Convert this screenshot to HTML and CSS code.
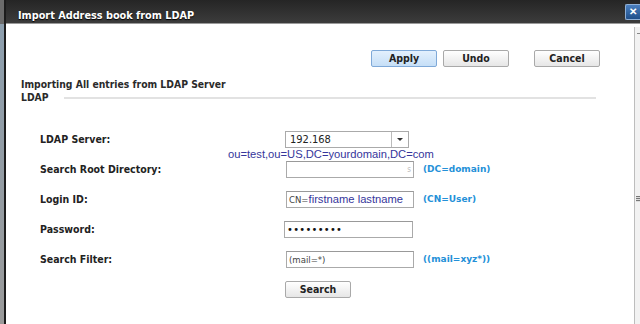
FILE: index.html
```html
<!DOCTYPE html>
<html lang="en">
<head>
    <meta charset="UTF-8">
    <meta name="viewport" content="width=device-width, initial-scale=1.0">
    <title>Import Address book from LDAP</title>
    <link rel="stylesheet" href="styles.css">
</head>
<body>
    <div class="screen">
        <div class="desktop-edge"></div>
        <div class="dialog">
            <div class="titlebar">
                <span class="title">Import Address book from LDAP</span>
                <button class="close-btn">&#x2715;</button>
            </div>
            <div class="dialog-body">
                <div class="content">
                    <div class="toolbar">
                        <button class="btn btn-primary">Apply</button>
                        <button class="btn btn-undo">Undo</button>
                        <button class="btn">Cancel</button>
                    </div>

                    <div class="section-head">
                        <p>Importing All entries from LDAP Server</p>
                        <div class="legend">
                            <span>LDAP</span>
                            <div class="rule"></div>
                        </div>
                    </div>

                    <div class="form">
                        <label>LDAP Server:</label>
                        <div class="cell">
                            <div class="select">
                                <span class="select-value">192.168</span>
                                <span class="select-arrow"></span>
                            </div>
                            <span class="annotation">ou=test,ou=US,DC=yourdomain,DC=com</span>
                        </div>
                        <span></span>

                        <label>Search Root Directory:</label>
                        <div class="cell">
                            <div class="field"><span class="cut">s</span></div>
                        </div>
                        <span class="hint">(DC=domain)</span>

                        <label>Login ID:</label>
                        <div class="cell">
                            <div class="field"><span class="prefix">CN=</span><span class="typed">firstname lastname</span></div>
                        </div>
                        <span class="hint">(CN=User)</span>

                        <label>Password:</label>
                        <div class="cell">
                            <input class="field password" type="password" value="secretpwd">
                        </div>
                        <span></span>

                        <label>Search Filter:</label>
                        <div class="cell">
                            <input class="field" type="text" value="(mail=*)">
                        </div>
                        <span class="hint">((mail=xyz*))</span>

                        <span></span>
                        <div class="cell">
                            <button class="btn btn-search">Search</button>
                        </div>
                        <span></span>
                    </div>
                </div>
                <div class="scrollbar">
                    <span class="scroll-tick"></span>
                    <span class="grip"></span>
                </div>
            </div>
        </div>
    </div>
</body>
</html>
```

FILE: styles.css
```css
body {
    margin: 0;
    padding: 0;
    background: #ffffff;
    font-family: "DejaVu Sans Condensed", "DejaVu Sans", sans-serif;
    color: #222;
}

.screen {
    display: flex;
    height: 324px;
    overflow: hidden;
}

.desktop-edge {
    width: 4px;
    background: linear-gradient(#6b6b6b 0, #6b6b6b 24px, #8d9fae 24px, #9a9a9a 100%);
}

.dialog {
    flex: 1;
    display: flex;
    flex-direction: column;
    border-left: 2px solid #1c1c1c;
}

/* Title bar */
.titlebar {
    height: 23px;
    display: flex;
    justify-content: space-between;
    align-items: flex-start;
    background: linear-gradient(#252525, #3c3c3c);
    border-bottom: 1px solid #9a9a9a;
}

.title {
    padding: 9px 0 0 12px;
    line-height: 14px;
    font-size: 10.8px;
    font-weight: bold;
    color: #fff;
    text-shadow: 0 1px 1px #000;
}

.close-btn {
    width: 15px;
    height: 16px;
    margin-top: 4px;
    padding: 0;
    border: 1px solid #8fb0d6;
    border-right: none;
    border-radius: 2px 0 0 2px;
    background: linear-gradient(#4a7fbf, #1f4f8a);
    color: #fff;
    font-size: 10px;
    font-weight: bold;
    line-height: 14px;
}

.dialog-body {
    flex: 1;
    display: flex;
}

.content {
    flex: 1;
}

.scrollbar {
    width: 5px;
    margin-top: 3px;
    border-left: 1px solid #bdbdbd;
    background: #f2f2f2;
    position: relative;
}

.scroll-tick {
    position: absolute;
    top: 6px;
    left: 2px;
    width: 3px;
    height: 1px;
    background: #888;
}

.grip {
    position: absolute;
    top: 169px;
    left: 1px;
    width: 4px;
    height: 6px;
    background: repeating-linear-gradient(#777 0, #777 1px, #ddd 1px, #ddd 2px);
}

/* Buttons */
.toolbar {
    display: flex;
    justify-content: flex-end;
    gap: 6px;
    padding: 26px 34px 0 0;
}

.btn {
    width: 66px;
    height: 17px;
    padding: 0;
    border: 1px solid #a9a9a9;
    border-radius: 2px;
    background: linear-gradient(#ffffff, #e6e6e6);
    font-family: "DejaVu Sans Condensed", "DejaVu Sans", sans-serif;
    font-size: 10.5px;
    font-weight: bold;
    color: #222;
    line-height: 15px;
}

.btn-primary {
    border-color: #7fa9d8;
    background: linear-gradient(#e3f0fd, #c6dff7);
}

.btn-undo {
    margin-right: 19px;
}

/* Section heading */
.section-head {
    margin-top: 11px;
    padding-left: 15px;
    font-size: 10.3px;
    font-weight: bold;
    line-height: 13px;
    color: #2a2a2a;
}

.section-head p {
    margin: 0;
}

.legend {
    display: flex;
    align-items: center;
    gap: 15px;
}

.rule {
    flex: 1;
    height: 2px;
    margin-right: 38px;
    background: #e2e2e2;
}

/* Form grid */
.form {
    display: grid;
    grid-template-columns: 245px 138px auto;
    grid-auto-rows: 30px;
    align-items: center;
    margin-top: 20px;
    padding-left: 34px;
}

.form label {
    font-size: 10.5px;
    font-weight: bold;
    color: #222;
}

.cell {
    position: relative;
    display: flex;
    align-items: center;
}

.field {
    box-sizing: border-box;
    width: 128px;
    height: 17px;
    margin: 0 0 0 1px;
    padding: 0 2px;
    border: 1px solid #aaa;
    border-top-color: #999;
    background: #fff;
    display: flex;
    align-items: center;
    font-family: "DejaVu Sans Condensed", "DejaVu Sans", sans-serif;
    font-size: 9.5px;
    color: #444;
    outline: none;
}

.field.password {
    margin-left: -1px;
    width: 129px;
    font-size: 11px;
    letter-spacing: 0.3px;
    color: #111;
}

.cut {
    margin-left: auto;
    font-size: 8px;
    line-height: 9px;
    color: #bbb;
}

.prefix {
    color: #444;
}

.typed,
.annotation {
    font-family: "Liberation Sans", Arial, sans-serif;
    font-size: 11.2px;
    color: #35359b;
}

/* sits just under the select, reaching into the next row */
.annotation {
    position: absolute;
    left: -57px;
    top: 18px;
    white-space: nowrap;
    line-height: 11px;
}

.select {
    box-sizing: border-box;
    width: 124px;
    height: 17px;
    display: flex;
    border: 1px solid #aaa;
    background: #fff;
}

.select-value {
    flex: 1;
    padding-left: 4px;
    font-size: 11px;
    line-height: 15px;
    color: #222;
}

.select-arrow {
    width: 16px;
    border-left: 1px solid #bbb;
    position: relative;
}

.select-arrow::after {
    content: "";
    position: absolute;
    left: 5px;
    top: 6px;
    border-left: 3px solid transparent;
    border-right: 3px solid transparent;
    border-top: 3px solid #333;
}

.hint {
    font-family: "DejaVu Sans", sans-serif;
    font-size: 9px;
    font-weight: bold;
    color: #2490d8;
}
```
